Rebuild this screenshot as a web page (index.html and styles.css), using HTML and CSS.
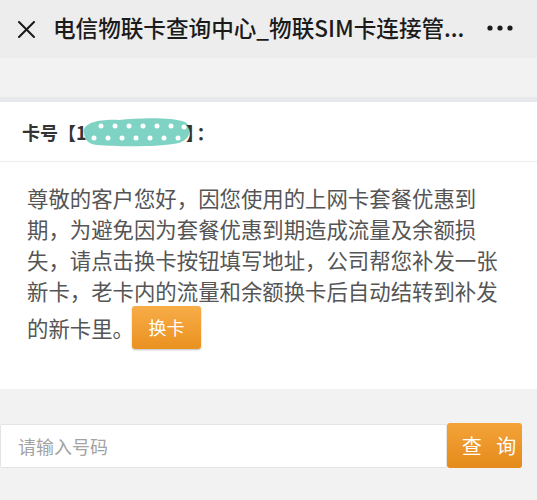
FILE: index.html
```html
<!DOCTYPE html>
<html lang="zh-CN">
<head>
<meta charset="utf-8">
<title>电信物联卡查询中心</title>
<link rel="stylesheet" href="styles.css">
</head>
<body>
<header class="topbar">
  <svg class="close-icon" width="17" height="17" viewBox="0 0 17 17" aria-hidden="true">
    <path d="M1 1 L16 16 M16 1 L1 16" stroke="#1a1a1a" stroke-width="2" fill="none" stroke-linecap="round"/>
  </svg>
  <h1 class="title">电信物联卡查询中心_物联SIM卡连接管...</h1>
  <svg class="more" width="26" height="6" viewBox="0 0 26 6" aria-hidden="true">
    <circle cx="3" cy="3" r="2.6" fill="#1b1b1b"/><circle cx="13" cy="3" r="2.6" fill="#1b1b1b"/><circle cx="23" cy="3" r="2.6" fill="#1b1b1b"/>
  </svg>
</header>
<div class="spacer"></div>
<main class="card">
  <div class="card-no">
    <span>卡号【1</span><svg class="mask" width="112" height="30" viewBox="0 0 112 30" aria-hidden="true">
      <path d="M5 16 C3 6 20 2 40 3 C60 1 92 0 106 5 C114 10 112 22 100 26 C82 30 40 30 18 28 C8 27 6 22 5 16 Z" fill="#7fd3c4"/>
      <g fill="#fff">
        <circle cx="22" cy="9" r="2.5"/><circle cx="36" cy="9" r="2.5"/><circle cx="50" cy="9" r="2.5"/><circle cx="64" cy="9" r="2.5"/><circle cx="78" cy="9" r="2.5"/><circle cx="92" cy="9" r="2.5"/><circle cx="105" cy="10" r="2.5"/>
        <circle cx="15" cy="21" r="2.5"/><circle cx="29" cy="21" r="2.5"/><circle cx="43" cy="21" r="2.5"/><circle cx="57" cy="21" r="2.5"/><circle cx="71" cy="21" r="2.5"/><circle cx="85" cy="21" r="2.5"/><circle cx="99" cy="21" r="2.5"/>
      </g>
    </svg><span class="close-br">】：</span>
  </div>
  <div class="notice">
    <p class="notice-text">尊敬的客户您好，因您使用的上网卡套餐优惠到期，为避免因为套餐优惠到期造成流量及余额损失，请点击换卡按钮填写地址，公司帮您补发一张新卡，老卡内的流量和余额换卡后自动结转到补发</p>
    <div class="last-row">
      <span>的新卡里。</span>
      <button class="swap-btn">换卡</button>
    </div>
  </div>
</main>
<section class="search">
  <input class="search-input" type="text" placeholder="请输入号码">
  <button class="search-btn">查 询</button>
</section>
</body>
</html>
```

FILE: styles.css
```css
* { box-sizing: border-box; }
html, body {
  margin: 0;
  padding: 0;
  background: #f2f2f2;
  font-family: "Noto Sans CJK SC", "Noto Sans", sans-serif;
}
.topbar {
  height: 58px;
  background: #ededed;
  display: flex;
  align-items: center;
  padding-left: 18px;
}
.close-icon { flex: none; }
.title {
  margin: -2px 0 0 18px;
  font-size: 22.6px;
  font-weight: 500;
  color: #1b1b1b;
  white-space: nowrap;
  line-height: 1;
}
.more {
  flex: none;
  margin-left: auto;
  margin-right: 24px;
  margin-top: -3px;
}
.spacer { height: 39px; }
.card {
  background: #fff;
  border-top: 5px solid #e6e8ec;
}
.card-no {
  height: 60px;
  border-bottom: 1px solid #ececec;
  padding-left: 22px;
  display: flex;
  align-items: center;
  font-size: 18px;
  font-weight: 700;
  color: #333;
}
.mask { margin-left: -8px; margin-right: -5px; flex: none; }
.close-br { letter-spacing: 2px; }
.notice {
  padding: 20px 27px 40px;
  font-size: 21.4px;
  line-height: 31px;
  color: #555;
}
.notice-text { margin: 0; }
.last-row {
  display: flex;
  align-items: center;
}
.swap-btn {
  flex: none;
  width: 69px;
  height: 43px;
  border: none;
  border-radius: 3px;
  background: linear-gradient(#f7ad48, #ea9120);
  box-shadow: 0 1px 2px rgba(0,0,0,0.25);
  color: #fff;
  font-family: "Noto Sans CJK SC", sans-serif;
  font-size: 18px;
  line-height: 43px;
  margin-left: -2px;
  padding: 0;
}
.search {
  margin-top: 35px;
  display: flex;
  margin-right: 15px;
  height: 44px;
}
.search-input {
  flex: 1;
  height: 44px;
  border: 1px solid #e4e4e4;
  border-radius: 2px;
  background: #fff;
  padding: 0 17px;
  font-family: "Noto Sans CJK SC", sans-serif;
  font-size: 18px;
  color: #333;
  outline: none;
}
.search-input::placeholder { color: #a3a3a3; }
.search-btn {
  width: 75px;
  height: 45px;
  margin-top: -1px;
  border: none;
  border-radius: 3px;
  background: linear-gradient(#f3a338, #e58a1b);
  color: #fff;
  font-family: "Noto Sans CJK SC", sans-serif;
  font-size: 20px;
  letter-spacing: 5px;
  padding: 0 0 0 14px;
}
```
